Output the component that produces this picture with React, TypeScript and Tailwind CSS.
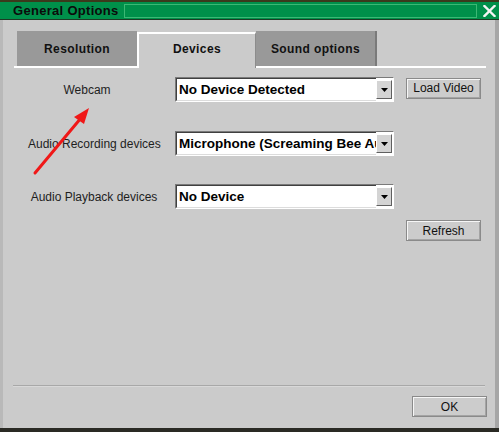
import React from 'react';

// --- Classic sunken combo box ---
const Combo: React.FC<{ value: string }> = ({ value }) => (
  <div className="shrink-0 w-[219px] h-[25px] flex border border-t-[#7a7a7a] border-l-[#7a7a7a] border-b-white border-r-white bg-white">
    <div className="flex-1 min-w-0 flex items-center overflow-hidden whitespace-nowrap pl-[2px] border border-t-[#404040] border-l-[#404040] border-b-[#dcdcdc] border-r-0">
      <span className="text-[13.5px] font-bold text-black leading-none">{value}</span>
    </div>
    <div className="shrink-0 w-[16px] my-[2px] mr-[1px] bg-[#d4d4d4] border border-t-white border-l-white border-b-[#606060] border-r-[#606060] flex items-center justify-center">
      <svg width="7" height="4" viewBox="0 0 7 4">
        <polygon points="0,0 7,0 3.5,4" fill="#000" />
      </svg>
    </div>
  </div>
);

// --- Raised push button ---
const PushButton: React.FC<{ children: React.ReactNode; className?: string }> = ({ children, className = '' }) => (
  <div className={`shrink-0 h-[21px] w-[75px] flex items-center justify-center border border-[#8a8a8a] shadow-[inset_1px_1px_0_#f6f6f6,inset_-1px_-1px_0_#a4a4a4] text-[12px] text-[#111] bg-[#cccccc] whitespace-nowrap ${className}`}>
    {children}
  </div>
);

const Row: React.FC<{ label: string; value: string; labelPad?: string; children?: React.ReactNode; className?: string }> = ({ label, value, labelPad = '', children, className = '' }) => (
  <div className={`flex items-center h-[25px] ${className}`}>
    <div className={`shrink-0 ml-[11px] w-[146px] text-center text-[12px] text-[#1e1e1e] whitespace-nowrap ${labelPad}`}>{label}</div>
    <div className="shrink-0 ml-[15px]">
      <Combo value={value} />
    </div>
    {children}
  </div>
);

export default function App() {
  return (
    <div
      className="relative w-[499px] h-[432px] flex flex-col bg-[#2c2a18] overflow-hidden"
      style={{ fontFamily: '"Liberation Sans", Arial, sans-serif' }}
    >
      <div className="h-[2px] bg-[#3b3a1c]" />

      {/* title bar */}
      <div className="h-[18px] bg-[#00904a] flex items-center border-b border-[#1d3a24]">
        <span className="shrink-0 ml-[13px] w-[111px] text-[13px] font-bold text-[#0b0b0b] tracking-[0.3px] leading-none whitespace-nowrap">General Options</span>
        <div className="shrink-0 w-[353px] h-[14px] border border-[#3cb874]" />
        <svg className="shrink-0 ml-[6px]" width="13" height="12" viewBox="0 0 13 12">
          <path d="M1.5 1 L11.5 11 M11.5 1 L1.5 11" stroke="#f4f4f4" strokeWidth="2.4" strokeLinecap="square" />
        </svg>
      </div>

      {/* dialog body */}
      <div className="flex-1 flex flex-col bg-[#cbcbcb] border-l-[3px] border-l-[#b9b9b9] border-r-[4px] border-r-[#a6a6a6]">
        {/* tab strip */}
        <div className="mt-[12px] ml-[11px] w-[472px] h-[36px] flex items-end border-b-2 border-white">
          <div className="ml-[3px] w-[120px] h-[35px] bg-[#999999] flex items-center justify-center text-[12px] font-bold text-[#111] tracking-[0.4px]">
            Resolution
          </div>
          <div className="w-[119px] h-[36px] bg-[#cbcbcb] border-t-2 border-l-2 border-white border-r border-r-[#8c8c8c] -mb-[2px] flex items-center justify-center pb-[4px] text-[12px] font-bold text-[#111] tracking-[0.4px]">
            Devices
          </div>
          <div className="w-[121px] h-[35px] bg-[#999999] border-r-2 border-r-[#7a7a7a] flex items-center justify-center text-[12px] font-bold text-[#111] tracking-[0.4px]">
            Sound options
          </div>
        </div>

        {/* device rows */}
        <Row label="Webcam" value="No Device Detected" className="mt-[9px]">
          <PushButton className="ml-[12px] -mt-[3px]">Load Video</PushButton>
        </Row>
        <Row label="Audio Recording devices" value="Microphone (Screaming Bee Audio)" labelPad="pl-[14px]" className="mt-[29px]" />
        <Row label="Audio Playback devices" value="No Device" labelPad="pl-[14px]" className="mt-[28px]" />

        <div className="flex justify-end pr-[14px] mt-[11px]">
          <PushButton>Refresh</PushButton>
        </div>

        <div className="flex-1" />
        <div className="mx-[10px] h-[2px] bg-[#a8a8a8] border-b border-[#d8d8d8]" />
        <div className="flex justify-end pr-[8px] mt-[9px] mb-[11px]">
          <PushButton>OK</PushButton>
        </div>
      </div>
      <div className="h-[4px] bg-[#2a2a24]" />

      {/* red annotation arrow */}
      <svg className="absolute left-0 top-0 pointer-events-none" width="499" height="432" viewBox="0 0 499 432">
        <line x1="35" y1="173" x2="81" y2="118" stroke="#f01818" strokeWidth="3" strokeLinecap="round" />
        <polygon points="89,108 74,117 84,124" fill="#f01818" />
      </svg>
    </div>
  );
}
